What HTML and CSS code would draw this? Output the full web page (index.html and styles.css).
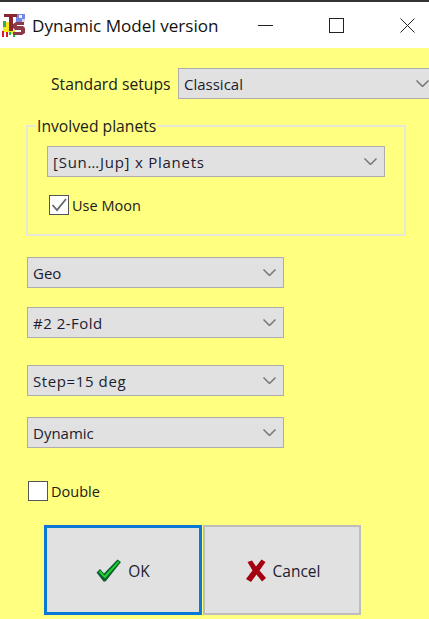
FILE: index.html
```html
<!DOCTYPE html>
<html lang="en">
<head>
    <meta charset="UTF-8">
    <meta name="viewport" content="width=device-width, initial-scale=1.0">
    <title>Dynamic Model version</title>
    <link rel="stylesheet" href="styles.css">
</head>
<body>
    <div class="window">
        <header class="titlebar">
            <svg class="app-icon" viewBox="0 0 24 24" xmlns="http://www.w3.org/2000/svg">
                <rect x="1" y="9" width="9" height="10" fill="#f8e818"/>
                <rect x="9" y="17" width="4" height="4" fill="#e8e040"/>
                <rect x="1" y="8" width="3" height="6" fill="#38a858"/>
                <rect x="0" y="18" width="2" height="6" fill="#e01828"/>
                <rect x="4" y="19" width="2" height="5" fill="#e01828"/>
                <rect x="7" y="19" width="2" height="3" fill="#28b048"/>
                <rect x="11" y="21" width="2" height="3" fill="#28b048"/>
                <rect x="14" y="1" width="9" height="8" fill="#5068d8" opacity="0.8"/>
                <rect x="17" y="2" width="3" height="3" fill="#f0f0f8"/>
                <rect x="20" y="6" width="3" height="3" fill="#d8d8f0"/>
                <path d="M2 1h13v3h-4v14H7V4H2z" fill="#8a2630"/>
                <path d="M22 9h-8l-3 2v4l2 2h6v2h-8v3h9l3-2v-5l-2-2h-6v-1h7z" fill="#8c3a48"/>
            </svg>
            <span class="window-title">Dynamic Model version</span>
            <div class="window-controls">
                <svg viewBox="0 0 15 15" xmlns="http://www.w3.org/2000/svg"><path d="M0 7.5h15" stroke="#222" fill="none"/></svg>
                <svg viewBox="0 0 15 15" xmlns="http://www.w3.org/2000/svg"><rect x="0.5" y="0.5" width="14" height="14" stroke="#222" fill="none"/></svg>
                <svg viewBox="0 0 15 15" xmlns="http://www.w3.org/2000/svg"><path d="M0.5 0.5l14 14M14.5 0.5l-14 14" stroke="#222" fill="none"/></svg>
            </div>
        </header>

        <main class="dialog">
            <div class="setup-row">
                <span class="setup-label">Standard setups</span>
                <div class="combo combo-setups">
                    <span>Classical</span>
                    <svg viewBox="0 0 13 7" xmlns="http://www.w3.org/2000/svg"><path d="M0.5 0.5l6 6 6-6" fill="none" stroke="#777" stroke-width="1.5"/></svg>
                </div>
            </div>

            <fieldset class="group">
                <legend>Involved planets</legend>
                <div class="combo combo-planets">
                    <span>[Sun…Jup] x Planets</span>
                    <svg viewBox="0 0 13 7" xmlns="http://www.w3.org/2000/svg"><path d="M0.5 0.5l6 6 6-6" fill="none" stroke="#777" stroke-width="1.5"/></svg>
                </div>
                <div class="check-row check-moon">
                    <span class="checkbox">
                        <svg viewBox="0 0 16 16" xmlns="http://www.w3.org/2000/svg"><path d="M1.5 8l4.5 5L15 2" fill="none" stroke="#666" stroke-width="1.8"/></svg>
                    </span>
                    <span>Use Moon</span>
                </div>
            </fieldset>

            <div class="combo combo-wide first-wide">
                <span>Geo</span>
                <svg viewBox="0 0 13 7" xmlns="http://www.w3.org/2000/svg"><path d="M0.5 0.5l6 6 6-6" fill="none" stroke="#777" stroke-width="1.5"/></svg>
            </div>
            <div class="combo combo-wide fold">
                <span>#2 2-Fold</span>
                <svg viewBox="0 0 13 7" xmlns="http://www.w3.org/2000/svg"><path d="M0.5 0.5l6 6 6-6" fill="none" stroke="#777" stroke-width="1.5"/></svg>
            </div>
            <div class="combo combo-wide step">
                <span>Step=15 deg</span>
                <svg viewBox="0 0 13 7" xmlns="http://www.w3.org/2000/svg"><path d="M0.5 0.5l6 6 6-6" fill="none" stroke="#777" stroke-width="1.5"/></svg>
            </div>
            <div class="combo combo-wide dynamic">
                <span>Dynamic</span>
                <svg viewBox="0 0 13 7" xmlns="http://www.w3.org/2000/svg"><path d="M0.5 0.5l6 6 6-6" fill="none" stroke="#777" stroke-width="1.5"/></svg>
            </div>

            <div class="check-row check-double">
                <span class="checkbox"></span>
                <span>Double</span>
            </div>

            <div class="buttons">
                <button class="btn btn-default" type="button">
                    <svg class="icon-ok" viewBox="0 0 25 23" xmlns="http://www.w3.org/2000/svg">
                        <path d="M0.5 13.5L4 10l4 4.5L21.5 0.5 25 3 9.5 22.5H7.5z" fill="#0b5a30"/>
                        <path d="M2.5 13L4.5 11.5l4 5L22 2l1.5 1L9 19.5z" fill="#1ed42c"/>
                    </svg>
                    <span class="btn-label">OK</span>
                </button>
                <button class="btn btn-cancel" type="button">
                    <svg class="icon-cancel" viewBox="0 0 20 23" xmlns="http://www.w3.org/2000/svg">
                        <path d="M1.5 3L6 1.5l4 6 5.5-7L19.5 3l-6 8.5 6.5 7.5-4 3.5-5.5-7L5 23 0 20l6.5-8.5z" fill="#a50010"/>
                    </svg>
                    <span class="btn-label">Cancel</span>
                </button>
            </div>
        </main>
    </div>
</body>
</html>
```

FILE: styles.css
```css
* {
    margin: 0;
    padding: 0;
    box-sizing: border-box;
}

html, body {
    height: 100%;
    overflow: hidden;
}

body {
    font-family: 'Open Sans', 'Noto Sans', sans-serif;
    font-size: 14.5px;
    color: #20201a;
    background: #ffff80;
}

.window {
    width: 429px;
    height: 619px;
    overflow: hidden;
}

.titlebar {
    height: 48px;
    background: #fff;
    border-top: 2px solid #333;
    display: flex;
    align-items: center;
    padding-left: 2px;
}

.app-icon {
    width: 24px;
    height: 24px;
    flex: none;
    filter: blur(0.5px);
}

.window-title {
    margin-left: 6px;
    font-size: 17.1px;
    color: #111;
}

.window-controls {
    margin-left: auto;
    display: flex;
    gap: 56px;
    padding-right: 14px;
}

.window-controls svg {
    width: 15px;
    height: 15px;
    display: block;
}

.dialog {
    padding: 20px 0 0 27px;
}

.setup-row {
    display: flex;
    align-items: center;
    padding-left: 24px;
}

.setup-label {
    width: 127px;
    flex: none;
    font-size: 15.7px;
}

.combo {
    height: 31px;
    background: #e1e1e1;
    border: 1px solid #adadad;
    display: flex;
    align-items: center;
    justify-content: space-between;
    padding: 0 7px 0 5px;
    flex: none;
    font-size: 15px;
    color: #1c1c30;
}

.combo svg {
    width: 13px;
    height: 7px;
    flex: none;
}

.combo-setups {
    width: 264px;
    padding-right: 12px;
}

.group {
    width: 380px;
    height: 120px;
    margin: 17px 0 0 -1px;
    border: 2px solid #e8e8d8;
    padding: 0 0 0 19px;
}

.group legend {
    margin-left: -11px;
    padding: 0 1px;
    line-height: 20px;
    font-size: 15.7px;
}

.combo-planets {
    width: 338px;
    margin-top: 10px;
    letter-spacing: 0.75px;
}

.check-row {
    display: flex;
    align-items: center;
    gap: 3px;
}

.check-moon {
    margin: 18px 0 0 2px;
}

.checkbox {
    width: 20px;
    height: 20px;
    background: #fff;
    border: 1px solid #555;
    display: flex;
    align-items: center;
    justify-content: center;
}

.checkbox svg {
    width: 16px;
    height: 16px;
}

.combo-wide {
    width: 257px;
}

.first-wide {
    margin-top: 21px;
}

.fold {
    margin-top: 19px;
    letter-spacing: 0.5px;
}

.step {
    margin-top: 27px;
    letter-spacing: 0.6px;
}

.dynamic {
    margin-top: 21px;
}

.check-double {
    margin: 33px 0 0 1px;
}

.buttons {
    display: flex;
    gap: 1px;
    margin: 24px 0 0 17px;
}

.btn {
    width: 158px;
    height: 90px;
    background: #e1e1e1;
    border: 2px solid #bdbdbd;
    font: inherit;
    font-size: 15.5px;
    color: #1c1c30;
    display: flex;
    align-items: center;
    justify-content: center;
    gap: 7px;
}

.btn-label {
    padding-top: 2px;
}

.btn svg {
    filter: blur(0.4px);
}

.icon-ok {
    width: 25px;
    height: 23px;
}

.icon-cancel {
    width: 20px;
    height: 23px;
}

.btn-default {
    border: 3px solid #0a78d7;
}

.btn-cancel {
    padding-left: 2px;
}
```
